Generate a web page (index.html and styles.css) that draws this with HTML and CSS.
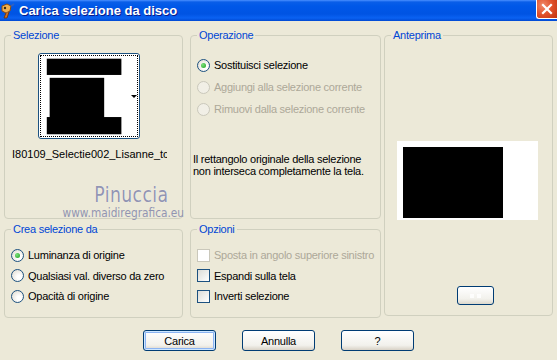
FILE: index.html
```html
<!DOCTYPE html>
<html lang="it">
<head>
    <meta charset="UTF-8">
    <title>Carica selezione da disco</title>
    <link rel="stylesheet" href="styles.css">
</head>
<body>
    <div class="window">
        <div class="titlebar">
            <svg class="app-icon" width="15" height="16" viewBox="0 0 15 16">
                <path d="M2 3 L7 1 L11 3 L10 8 L6 10 L2 8 Z" fill="#f0b050" stroke="#8a4a10" stroke-width="1"/>
                <circle cx="5" cy="5" r="1.2" fill="#3a2a10"/>
                <path d="M6 10 L4 15 L7 15 L9 9" fill="#d07020" stroke="#6a3008" stroke-width="0.8"/>
                <path d="M11 3 L14 1" stroke="#3060c0" stroke-width="2"/>
            </svg>
            <span class="title">Carica selezione da disco</span>
            <span class="close">
                <svg width="12" height="12" viewBox="0 0 12 12">
                    <path d="M2 2 L10 10 M10 2 L2 10" stroke="#fff" stroke-width="2.2" stroke-linecap="square"/>
                </svg>
            </span>
        </div>

        <div class="content">
            <div class="groups">
                <fieldset class="group sel">
                    <legend>Selezione</legend>
                    <div class="combo">
                        <div class="combo-inner">
                            <svg class="thumb" width="92" height="80" viewBox="0 0 92 80">
                                <rect width="92" height="80" fill="#fff"/>
                                <rect x="5" y="1" width="78" height="17" fill="#000"/>
                                <rect x="8" y="21" width="57" height="42" fill="#000"/>
                                <rect x="5" y="62" width="78" height="18" fill="#000"/>
                            </svg>
                            <span class="arrow"></span>
                        </div>
                    </div>
                    <div class="filename">I80109_Selectie002_Lisanne_tc</div>
                    <div class="watermark">
                        <span class="wm-name">Pinuccia</span>
                        <span class="wm-url">www.maidiregrafica.eu</span>
                    </div>
                </fieldset>

                <fieldset class="group op">
                    <legend>Operazione</legend>
                    <div class="options">
                        <div class="option"><span class="radio checked"></span>Sostituisci selezione</div>
                        <div class="option disabled"><span class="radio"></span>Aggiungi alla selezione corrente</div>
                        <div class="option disabled"><span class="radio"></span>Rimuovi dalla selezione corrente</div>
                    </div>
                    <p class="note">Il rettangolo originale della selezione<br>non interseca completamente la tela.</p>
                </fieldset>

                <fieldset class="group prev">
                    <legend>Anteprima</legend>
                    <div class="preview"><div class="preview-fill"></div></div>
                    <div class="small-btn"><span></span><span></span></div>
                </fieldset>

                <fieldset class="group crea">
                    <legend>Crea selezione da</legend>
                    <div class="options tight">
                        <div class="option"><span class="radio checked"></span>Luminanza di origine</div>
                        <div class="option"><span class="radio"></span>Qualsiasi val. diverso da zero</div>
                        <div class="option"><span class="radio"></span>Opacità di origine</div>
                    </div>
                </fieldset>

                <fieldset class="group opz">
                    <legend>Opzioni</legend>
                    <div class="options tight">
                        <div class="option disabled"><span class="check"></span>Sposta in angolo superiore sinistro</div>
                        <div class="option"><span class="check"></span>Espandi sulla tela</div>
                        <div class="option"><span class="check"></span>Inverti selezione</div>
                    </div>
                </fieldset>
            </div>

            <div class="buttons">
                <button class="default">Carica</button>
                <button>Annulla</button>
                <button>?</button>
            </div>
        </div>
    </div>
</body>
</html>
```

FILE: styles.css
```css
body {
    margin: 0;
    background: #ece9d8;
    font-family: "Liberation Sans", Arial, sans-serif;
    font-size: 11px;
    letter-spacing: -0.25px;
    color: #000;
}

.window {
    width: 557px;
    height: 360px;
    overflow: hidden;
    background: #ece9d8;
}

/* title bar */
.titlebar {
    height: 21px;
    display: flex;
    align-items: center;
    background: linear-gradient(#4a90ff 0, #0a5ee8 2px, #0058e8 6px, #0054e3 14px, #0a62f2 18px, #0048d2 21px);
}

.app-icon {
    flex: none;
}

.title {
    margin-left: 4px;
    font-size: 13px;
    font-weight: bold;
    letter-spacing: 0;
    color: #fff;
    text-shadow: 1px 1px #0a1a8a;
}

.close {
    margin-left: auto;
    align-self: flex-start;
    width: 20px;
    height: 18px;
    display: flex;
    align-items: center;
    justify-content: center;
    border: 1px solid #fff;
    border-right: none;
    border-top: none;
    border-radius: 0 0 0 3px;
    background: radial-gradient(circle at 30% 30%, #f08a6a, #e0502a 50%, #c03410);
}

/* dialog */
.content {
    padding-top: 8px;
}

.groups {
    display: grid;
    grid-template-columns: 186px 194px 169px;
    grid-template-rows: 190px 95px;
    row-gap: 4px;
    padding-left: 4px;
}

.group {
    margin: 0;
    padding: 0;
    min-width: 0;
    border: 1px solid #d0d0bf;
    border-radius: 4px;
    box-sizing: border-box;
    position: relative;
}

.group legend {
    margin-left: 6px;
    padding: 0 2px;
    line-height: 13px;
    color: #0046d5;
}

.sel {
    width: 179px;
    grid-column: 1;
    grid-row: 1;
}

.op {
    width: 191px;
    grid-column: 2;
    grid-row: 1;
}

.prev {
    width: 169px;
    grid-column: 3;
    grid-row: 1 / 3;
    height: 287px;
}

.crea {
    width: 179px;
    grid-column: 1;
    grid-row: 2;
}

.opz {
    width: 191px;
    grid-column: 2;
    grid-row: 2;
}

/* selezione */
.combo {
    margin: 11px 0 0 33px;
    width: 102px;
    height: 86px;
    box-sizing: border-box;
    padding: 1px;
    border: 1px solid #1c5180;
    border-radius: 3px;
    background: #fff;
}

.combo-inner {
    height: 100%;
    box-sizing: border-box;
    border: 1px dotted #000;
    display: flex;
    align-items: center;
}

.thumb {
    display: block;
    margin-left: 1px;
}

.arrow {
    margin-left: 1px;
    border-left: 3px solid transparent;
    border-right: 3px solid transparent;
    border-top: 3px solid #000;
}

.filename {
    margin: 9px 0 0 7px;
    width: 155px;
    line-height: 13px;
    white-space: nowrap;
    overflow: hidden;
    letter-spacing: 0;
}

.watermark {
    position: absolute;
    left: 56px;
    top: 142px;
    width: 124px;
    display: flex;
    flex-direction: column;
    align-items: flex-end;
    color: #9295b2;
    pointer-events: none;
}

.wm-name {
    font-family: "DejaVu Sans", sans-serif;
    font-size: 21px;
    line-height: 22px;
    letter-spacing: 0.5px;
    margin-right: 17px;
    transform: scaleX(0.82);
    transform-origin: right;
    text-shadow: 0 0 1px #fff;
}

.wm-url {
    font-family: "DejaVu Sans", sans-serif;
    font-size: 11.5px;
    line-height: 12px;
    letter-spacing: 0;
    margin-top: 1px;
    margin-right: 1px;
    transform: scaleX(0.92);
    transform-origin: right;
}

/* options */
.options {
    padding: 12px 0 0 6px;
}

.option {
    height: 22px;
    display: flex;
    align-items: center;
    white-space: nowrap;
}

.options.tight {
    padding-top: 9px;
}

.options.tight .option {
    height: 20.5px;
}

.option.disabled {
    color: #aca899;
}

.radio {
    width: 13px;
    height: 13px;
    box-sizing: border-box;
    border: 1px solid #1c5180;
    border-radius: 50%;
    background: radial-gradient(circle at 65% 65%, #fff 20%, #dcd7cb);
    margin-right: 4px;
    display: flex;
    align-items: center;
    justify-content: center;
    flex: none;
}

.radio.checked::after {
    content: "";
    width: 5px;
    height: 5px;
    border-radius: 50%;
    background: radial-gradient(circle at 35% 35%, #7be07b, #21a121);
}

.disabled .radio {
    border-color: #cac8bb;
    background: #f1efe6;
}

.check {
    width: 13px;
    height: 13px;
    box-sizing: border-box;
    border: 1px solid #1c5180;
    background: linear-gradient(135deg, #dcdcd7, #fff);
    margin-right: 4px;
    flex: none;
}

.disabled .check {
    border-color: #cac8bb;
    background: #fff;
}

.note {
    margin: 33px 0 0 2px;
    line-height: 12px;
    white-space: nowrap;
}

/* anteprima */
.preview {
    margin: 99px 0 0 12px;
    width: 141px;
    height: 79px;
    background: #fff;
    padding: 6px 0 0 6px;
    box-sizing: border-box;
}

.preview-fill {
    width: 100px;
    height: 71px;
    background: #000;
}

.small-btn {
    margin: 66px 0 0 72px;
    width: 37px;
    height: 19px;
    box-sizing: border-box;
    border: 1px solid #003c74;
    border-radius: 3px;
    background: linear-gradient(#fff, #f2f1ec 70%, #dcd8cc);
    display: flex;
    align-items: center;
    justify-content: center;
    gap: 3px;
}

.small-btn span {
    width: 4px;
    height: 4px;
    background: #fff;
    opacity: 0.8;
}

/* buttons */
.buttons {
    margin-top: 12px;
    display: flex;
    justify-content: center;
    gap: 26px;
}

button {
    width: 73px;
    height: 21px;
    padding: 0;
    font-family: "Liberation Sans", Arial, sans-serif;
    font-size: 11px;
    letter-spacing: -0.25px;
    color: #000;
    border: 1px solid #003c74;
    border-radius: 3px;
    background: linear-gradient(#fff, #f2f1ec 75%, #d8d2c6);
}

button.default {
    box-shadow: inset 0 0 0 1px #cee7ff, inset 0 0 0 2px #8cb4f2;
}
```
